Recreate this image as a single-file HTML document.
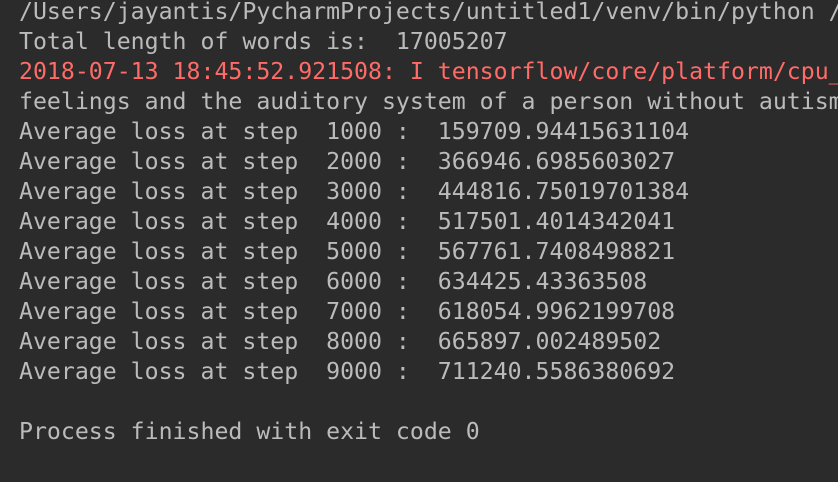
<!DOCTYPE html>
<html><head><style>
html,body{margin:0;padding:0;background:#2b2b2b;width:838px;height:482px;overflow:hidden}
pre{position:absolute;left:19px;top:-3px;margin:0;font-family:"DejaVu Sans Mono","Liberation Mono",monospace;font-size:23.2px;line-height:30px;color:#bbbbbb;white-space:pre}
.r{color:#ff6b68}
</style></head><body><pre>/Users/jayantis/PycharmProjects/untitled1/venv/bin/python /
Total length of words is:  17005207
<span class="r">2018-07-13 18:45:52.921508: I tensorflow/core/platform/cpu_</span>
feelings and the auditory system of a person without autism
Average loss at step  1000 :  159709.94415631104
Average loss at step  2000 :  366946.6985603027
Average loss at step  3000 :  444816.75019701384
Average loss at step  4000 :  517501.4014342041
Average loss at step  5000 :  567761.7408498821
Average loss at step  6000 :  634425.43363508
Average loss at step  7000 :  618054.9962199708
Average loss at step  8000 :  665897.002489502
Average loss at step  9000 :  711240.5586380692

Process finished with exit code 0</pre></body></html>
